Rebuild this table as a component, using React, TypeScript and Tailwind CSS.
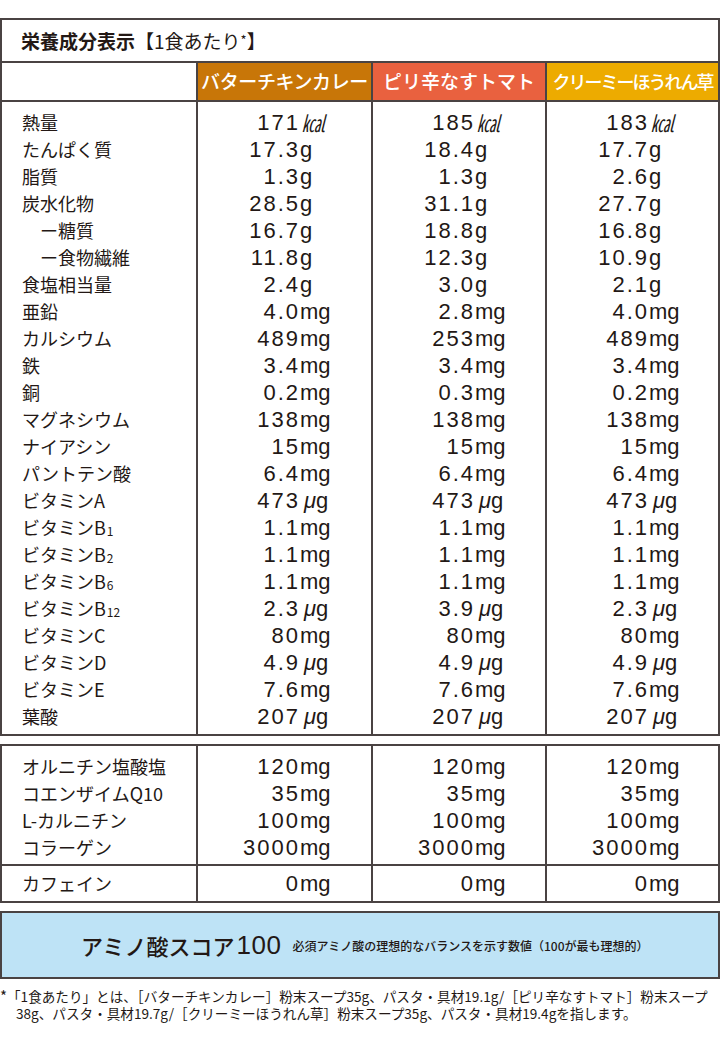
import React from "react";

type V = [string, string];
type Row = { label: React.ReactNode; indent?: boolean; vals: V[] };

const same = (n: string, u: string): V[] => [
  [n, u],
  [n, u],
  [n, u],
];

const sub = (t: string) => (
  <span className="text-[12px] align-[-1px] ml-[1px]">{t}</span>
);

const rows: Row[] = [
  { label: "熱量", vals: [["171", "kcal"], ["185", "kcal"], ["183", "kcal"]] },
  { label: "たんぱく質", vals: [["17.3", "g"], ["18.4", "g"], ["17.7", "g"]] },
  { label: "脂質", vals: [["1.3", "g"], ["1.3", "g"], ["2.6", "g"]] },
  { label: "炭水化物", vals: [["28.5", "g"], ["31.1", "g"], ["27.7", "g"]] },
  { label: "ー糖質", indent: true, vals: [["16.7", "g"], ["18.8", "g"], ["16.8", "g"]] },
  { label: "ー食物繊維", indent: true, vals: [["11.8", "g"], ["12.3", "g"], ["10.9", "g"]] },
  { label: "食塩相当量", vals: [["2.4", "g"], ["3.0", "g"], ["2.1", "g"]] },
  { label: "亜鉛", vals: [["4.0", "mg"], ["2.8", "mg"], ["4.0", "mg"]] },
  { label: "カルシウム", vals: [["489", "mg"], ["253", "mg"], ["489", "mg"]] },
  { label: "鉄", vals: same("3.4", "mg") },
  { label: "銅", vals: [["0.2", "mg"], ["0.3", "mg"], ["0.2", "mg"]] },
  { label: "マグネシウム", vals: same("138", "mg") },
  { label: "ナイアシン", vals: same("15", "mg") },
  { label: "パントテン酸", vals: same("6.4", "mg") },
  { label: "ビタミンA", vals: same("473", "ug") },
  { label: <>ビタミンB{sub("1")}</>, vals: same("1.1", "mg") },
  { label: <>ビタミンB{sub("2")}</>, vals: same("1.1", "mg") },
  { label: <>ビタミンB{sub("6")}</>, vals: same("1.1", "mg") },
  { label: <>ビタミンB{sub("12")}</>, vals: [["2.3", "ug"], ["3.9", "ug"], ["2.3", "ug"]] },
  { label: "ビタミンC", vals: same("80", "mg") },
  { label: "ビタミンD", vals: same("4.9", "ug") },
  { label: "ビタミンE", vals: same("7.6", "mg") },
  { label: "葉酸", vals: same("207", "ug") },
];

const rows2: Row[] = [
  { label: "オルニチン塩酸塩", vals: same("120", "mg") },
  { label: "コエンザイムQ10", vals: same("35", "mg") },
  { label: "L-カルニチン", vals: same("100", "mg") },
  { label: "コラーゲン", vals: same("3000", "mg") },
];

const JP = "font-['Noto_Sans_CJK_JP',sans-serif]";
const NUM = "font-['Liberation_Sans','Noto_Sans_CJK_JP',sans-serif]";

function Unit({ u }: { u: string }) {
  if (u === "kcal")
    return (
      <span className={`${JP} text-[23px] ml-[2px] leading-none italic`}>㎉</span>
    );
  if (u === "ug")
    return (
      <span className={`${NUM} text-[22px] ml-[4px]`}>
        <span className="italic">μ</span>g
      </span>
    );
  return <span className={`${NUM} text-[22px]`}>{u}</span>;
}

function Value({ v }: { v: V }) {
  return (
    <div className="flex h-[27px] items-center">
      <span className={`${NUM} w-[102px] text-right text-[22px] tracking-[2px]`}>
        {v[0]}
      </span>
      <Unit u={v[1]} />
    </div>
  );
}

function Label({ r }: { r: Row }) {
  return (
    <div
      className={`${JP} h-[27px] leading-[27px] text-[18px] whitespace-nowrap ${
        r.indent ? "pl-[38px]" : "pl-[20px]"
      }`}
    >
      {r.label}
    </div>
  );
}

function Body({ data, pt, pb }: { data: Row[]; pt: string; pb: string }) {
  return (
    <div className="flex">
      <div className={`w-[194px] ${pt} ${pb}`}>
        {data.map((r, i) => (
          <Label key={i} r={r} />
        ))}
      </div>
      {[0, 1, 2].map((c) => (
        <div
          key={c}
          className={`${
            c === 0 ? "w-[175px]" : c === 1 ? "w-[174px]" : "flex-1"
          } border-l-2 border-[#4a4343] ${pt} ${pb}`}
        >
          {data.map((r, i) => (
            <Value key={i} v={r.vals[c]} />
          ))}
        </div>
      ))}
    </div>
  );
}

export default function App() {
  return (
    <div className="w-[720px] h-[1040px] bg-white text-[#231815] pt-[18px] overflow-hidden">
      {/* Table 1 */}
      <div className="border-2 border-[#4a4343]">
        <div className={`${JP} h-[41px] flex items-center pl-[19px] pt-[1px] text-[19px] whitespace-nowrap`}>
          <span className="font-bold">栄養成分表示</span>
          <span className="font-normal">【1食あたり<span className="text-[13px] align-[4px]">*</span>】</span>
        </div>
        <div className="flex h-[41px] border-y-2 border-[#4a4343]">
          <div className="w-[194px]" />
          <div className={`${JP} w-[175px] border-l-2 border-[#4a4343] bg-[#c87608] text-white text-[19px] font-medium tracking-[-0.4px] flex items-center justify-center whitespace-nowrap`}>
            バターチキンカレー
          </div>
          <div className={`${JP} w-[174px] border-l-2 border-[#4a4343] bg-[#e9613f] text-white text-[19px] font-medium flex items-center justify-center whitespace-nowrap`}>
            ピリ辛なすトマト
          </div>
          <div className={`${JP} flex-1 border-l-2 border-[#4a4343] bg-[#edab00] text-white text-[18px] font-medium tracking-[-2px] flex items-center justify-center whitespace-nowrap`}>
            クリーミーほうれん草
          </div>
        </div>
        <Body data={rows} pt="pt-[7px]" pb="pb-[4px]" />
      </div>

      {/* Table 2 */}
      <div className="mt-[8px] border-2 border-[#4a4343]">
        <Body data={rows2} pt="pt-[7px]" pb="pb-[3px]" />
        <div className="border-t-2 border-[#4a4343]">
          <Body
            data={[{ label: "カフェイン", vals: same("0", "mg") }]}
            pt="pt-[4px]"
            pb="pb-[4px]"
          />
        </div>
      </div>

      {/* Amino score */}
      <div className="mt-[8px] h-[68px] border-2 border-[#4a4343] bg-[#bee3f6] flex items-center pl-[79px] pt-[1px] whitespace-nowrap">
        <span className={`${JP} text-[22px] font-medium`}>アミノ酸スコア</span>
        <span className={`${NUM} text-[26px] ml-[2px] tracking-[0.5px]`}>100</span>
        <span className={`${JP} text-[12px] ml-[11px] font-medium`}>
          必須アミノ酸の理想的なバランスを示す数値（100が最も理想的）
        </span>
      </div>

      {/* Footnote */}
      <div className={`${JP} mt-[8px] text-[13.6px] leading-[17px] whitespace-nowrap`}>
        <div>
          <span className="text-[15px]">*</span>「1食あたり」とは、［バターチキンカレー］粉末スープ35g、パスタ・具材19.1g/［ピリ辛なすトマト］粉末スープ
        </div>
        <div className="pl-[16px]">
          38g、パスタ・具材19.7g/［クリーミーほうれん草］粉末スープ35g、パスタ・具材19.4gを指します。
        </div>
      </div>
    </div>
  );
}
